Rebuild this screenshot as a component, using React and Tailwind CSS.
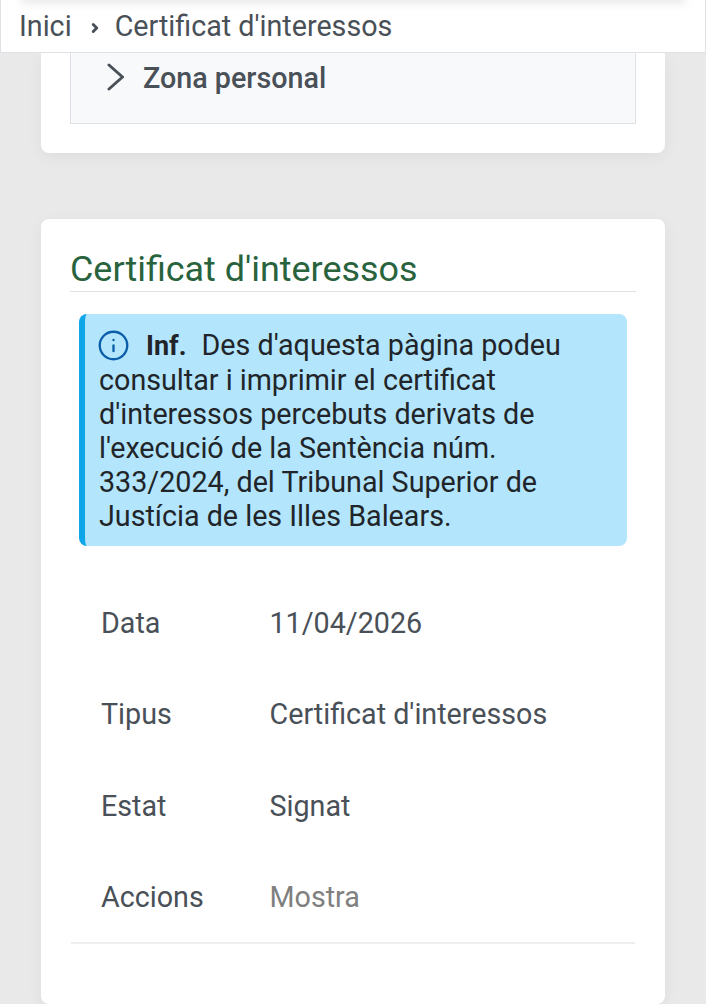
import { ChevronRight, Info } from 'lucide-react'

const rows = [
  ['Data', '11/04/2026'],
  ['Tipus', "Certificat d'interessos"],
  ['Estat', 'Signat'],
]

export default function App() {
  return (
    <div className="h-[1004px] overflow-hidden bg-[#e9e9e9] font-['Roboto',sans-serif] text-[#495057]">
      <nav className="relative z-10 flex h-[53px] items-center overflow-hidden border border-[#dee2e6] border-t-0 bg-white pl-[18px] text-[28.7px] leading-none">
        <div className="absolute -top-[10px] left-[20px] right-[20px] h-[10px] shadow-[0_3px_10px_rgba(0,0,0,0.1)]" />
        <span>Inici</span>
        <ChevronRight size={14} strokeWidth={5} className="ml-[16px] mr-[13px] mt-1" />
        <span>Certificat d'interessos</span>
      </nav>

      <section className="mx-[41px] rounded-b-lg bg-white px-[29px] pb-[29px] shadow-[0_4px_16px_rgba(0,0,0,0.05)]">
        <div className="h-[71px] border border-t-0 border-[#dee2e6] bg-[#f8f9fa] pl-[36px] pt-[7px]">
          <div className="flex items-center gap-[19px] text-[28.7px] font-medium leading-[36px]">
            <svg width="18" height="28" viewBox="0 0 18 28" fill="none" stroke="currentColor" strokeWidth="3" strokeLinecap="round" strokeLinejoin="round" className="-mt-[3px]">
              <polyline points="2,2 15.5,14 2,26" />
            </svg>
            <span className="-ml-[1px]">Zona personal</span>
          </div>
        </div>
      </section>

      <section className="mx-[41px] mt-[66px] h-[785px] rounded-lg bg-white px-[29px] pt-[28px] shadow-[0_4px_16px_rgba(0,0,0,0.05)]">
        <h2 className="border-b border-[#dee2e6] text-[35.9px] font-normal leading-[44px] text-[#28633d]">Certificat d'interessos</h2>

        <div className="mx-[9px] mt-[22px] rounded-lg border-l-[6px] border-[#0ea5e9] bg-[#b3e5fc] pb-[13px] pl-[14px] pr-4 pt-[14px] text-[28.7px] leading-[34px] text-[#212529]">
          <Info size={33} strokeWidth={1.7} className="-ml-[2px] mr-[16px] inline-block align-[-7px] text-[#0b5ea8]" />
          <strong className="mr-[15px] text-[27px] font-bold">Inf.</strong>
          Des d'aquesta pàgina podeu consultar i imprimir el certificat d'interessos percebuts derivats de l'execució de la Sentència núm. 333/2024, del Tribunal Superior de Justícia de les Illes Balears.
        </div>

        <div className="mx-[1px] mt-[32px] border-b-2 border-[#eceef0] text-[28.7px] leading-[91.4px]">
          {rows.map(([label, value]) => (
            <div key={label} className="flex px-[30px]">
              <span className="w-[168.5px]">{label}</span>
              <span>{value}</span>
            </div>
          ))}
          <div className="flex h-[89.5px] px-[30px]">
            <span className="w-[168.5px]">Accions</span>
            <span className="text-[#808080]">Mostra</span>
          </div>
        </div>
      </section>
    </div>
  )
}
